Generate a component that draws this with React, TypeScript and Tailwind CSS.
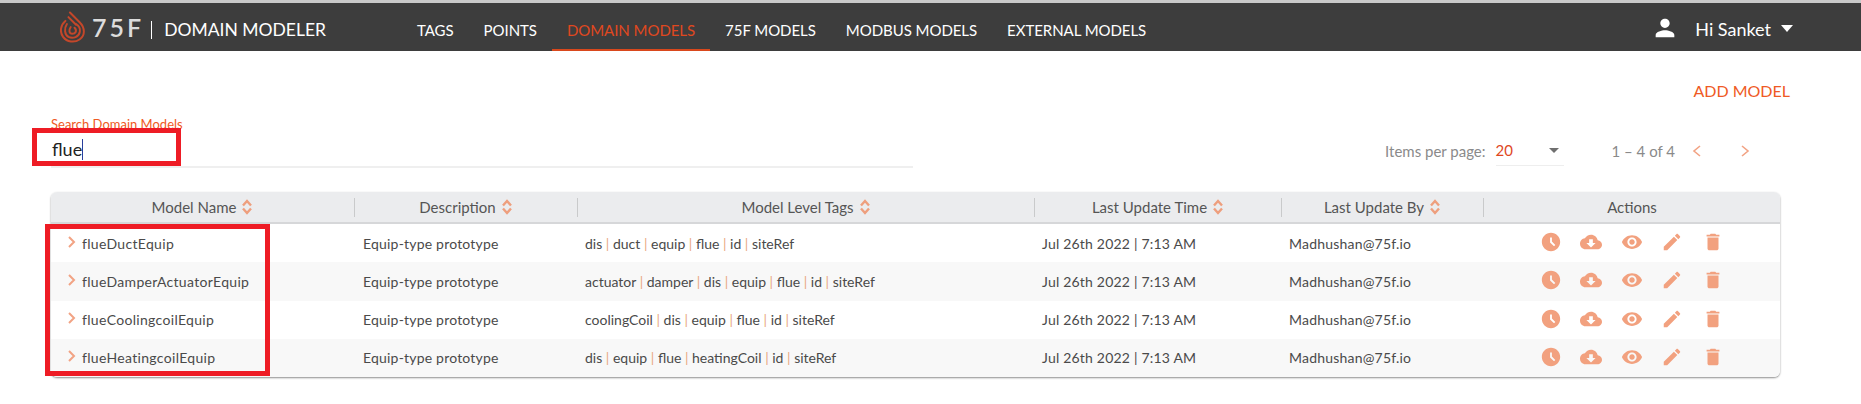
import React from "react";

const rows = [
  { name: "flueDuctEquip", tags: ["dis", "duct", "equip", "flue", "id", "siteRef"] },
  { name: "flueDamperActuatorEquip", tags: ["actuator", "damper", "dis", "equip", "flue", "id", "siteRef"] },
  { name: "flueCoolingcoilEquip", tags: ["coolingCoil", "dis", "equip", "flue", "id", "siteRef"] },
  { name: "flueHeatingcoilEquip", tags: ["dis", "equip", "flue", "heatingCoil", "id", "siteRef"] },
];

const actionPaths = [
  "M11.99 2C6.47 2 2 6.48 2 12s4.47 10 9.99 10C17.52 22 22 17.52 22 12S17.52 2 11.99 2zm3.3 14.71L11 12.41V7h2v4.59l3.71 3.71-1.42 1.41z",
  "M19.35 10.04C18.67 6.59 15.64 4 12 4 9.11 4 6.6 5.64 5.35 8.04 2.34 8.36 0 10.91 0 14c0 3.31 2.69 6 6 6h13c2.76 0 5-2.24 5-5 0-2.64-2.05-4.78-4.65-4.96zM17 13l-5 5-5-5h3V9h4v4h3z",
  "M12 4.5C7 4.5 2.73 7.61 1 12c1.73 4.39 6 7.5 11 7.5s9.27-3.11 11-7.5c-1.73-4.39-6-7.5-11-7.5zM12 17c-2.76 0-5-2.24-5-5s2.24-5 5-5 5 2.24 5 5-2.24 5-5 5zm0-8c-1.66 0-3 1.34-3 3s1.34 3 3 3 3-1.34 3-3-1.34-3-3-3z",
  "M3 17.25V21h3.75L17.81 9.94l-3.75-3.75L3 17.25zM20.71 7.04c.39-.39.39-1.02 0-1.41l-2.34-2.34c-.39-.39-1.02-.39-1.41 0l-1.83 1.83 3.75 3.75 1.83-1.83z",
  "M6 19c0 1.1.9 2 2 2h8c1.1 0 2-.9 2-2V7H6v12zM19 4h-3.5l-1-1h-5l-1 1H5v2h14V4z",
];

const navItems = ["TAGS", "POINTS", "DOMAIN MODELS", "75F MODELS", "MODBUS MODELS", "EXTERNAL MODELS"];

function Logo() {
  return (
    <svg width="26" height="32" viewBox="0 0 34 42" fill="none" stroke="#c4472a" strokeWidth="2.6" strokeLinecap="round">
      <path d="M13 2 L26 15 C33 22 33 32 26 37 C19 42 9 41 4 34 C-1 27 1 18 7 13" />
      <path d="M9 17 C5 23 6 31 11 34 C17 37 25 34 26 27 C27 22 24 19 21 17" />
      <path d="M11 8 L21 18" />
      <path d="M14 21 C11 25 12 30 16 30 C20 30 23 26 19 22" />
    </svg>
  );
}

function SortIcon() {
  return (
    <svg width="12" height="16" viewBox="0 0 12 16" fill="none" stroke="#ee9f7e" strokeWidth="2.4" className="shrink-0">
      <path d="M2 6.5 L6 2 L10 6.5" />
      <path d="M2 9.5 L6 14 L10 9.5" />
    </svg>
  );
}

function HeaderCell({ label, sort = true, last = false }: { label: string; sort?: boolean; last?: boolean }) {
  return (
    <div className={`flex h-[19px] items-center justify-center gap-[5px] ${last ? "" : "border-r border-[#c9cacb]"}`}>
      <span>{label}</span>
      {sort && <SortIcon />}
    </div>
  );
}

function Tags({ tags }: { tags: string[] }) {
  return (
    <span className="tracking-normal">
      {tags.map((t, i) => (
        <React.Fragment key={t}>
          {i > 0 && <span className="text-[#e9a77f]"> | </span>}
          {t}
        </React.Fragment>
      ))}
    </span>
  );
}

const gridCols = "grid grid-cols-[304px_223px_457px_247px_202px_1fr] items-center";

export default function App() {
  return (
    <div className="relative h-[404px] w-[1861px] overflow-hidden bg-white font-['Lato','Liberation_Sans',sans-serif]">
      <header className="flex h-[51px] items-stretch border-t-[3px] border-[#c9c9c9] bg-[#3d3d3d] pl-[60px] pr-[68px] text-white">
        <div className="flex w-[342px] items-center">
          <Logo />
          <span className="ml-[6px] text-[25px] font-semibold leading-none tracking-[3px] text-[#dcdcdc]">75F</span>
          <span className="ml-[7px] mr-[12px] mt-[5px] h-[18px] w-px bg-white" />
          <span className="mt-[6px] text-[17.5px] leading-none">DOMAIN MODELER</span>
        </div>
        <nav className="flex items-stretch">
          {navItems.map((n) => (
            <div
              key={n}
              className={`flex items-center px-[15px] pt-[8px] text-[15px] tracking-[-0.05px] ${
                n === "DOMAIN MODELS" ? "border-b-2 border-[#d9481c] text-[#e0481f]" : "border-b-2 border-transparent"
              }`}
            >
              {n}
            </div>
          ))}
        </nav>
        <div className="ml-auto flex items-center pt-[2px]">
          <svg width="28" height="28" viewBox="0 0 24 24" fill="#fff">
            <path d="M12 12c2.21 0 4-1.79 4-4s-1.79-4-4-4-4 1.79-4 4 1.79 4 4 4zm0 2c-2.67 0-8 1.34-8 4v2h16v-2c0-2.66-5.33-4-8-4z" />
          </svg>
          <span className="ml-[16px] mt-[2px] text-[18px]">Hi Sanket</span>
          <span className="ml-[10px] h-0 w-0 border-x-[6px] border-t-[7px] border-x-transparent border-t-white" />
        </div>
      </header>

      <main className="pl-[51px] pr-[71px]">
        <div className="flex justify-end pt-[31px] text-[16px] leading-[18px] text-[#ef5a24]">ADD MODEL</div>

        <div className="mt-[17px] flex items-start justify-between">
          <div className="w-[862px] border-b-2 border-[#efefef] pb-[6px]">
            <div className="text-[13px] leading-[14px] text-[#ef5a24]">Search Domain Models</div>
            <div className="mt-[7px] flex h-[22px] items-center pl-[1px] text-[18px] text-[#222]">
              flue
              <span className="h-[21px] w-px bg-[#2a3f9c]" />
            </div>
          </div>
          <div className="mt-[19px] flex items-center pr-[39px] text-[15px] text-[#8a8a8a]">
            <span>Items per page:</span>
            <div className="ml-[10px] flex h-[30px] w-[68px] items-center justify-between border-b border-[#eeeeee] pr-[5px]">
              <span className="text-[#e0481f]">20</span>
              <span className="h-0 w-0 border-x-[5px] border-t-[5px] border-x-transparent border-t-[#6f6f6f]" />
            </div>
            <span className="ml-[48px]">1 – 4 of 4</span>
            <svg width="12" height="14" viewBox="0 0 12 14" fill="none" stroke="#f2a384" strokeWidth="1.6" className="ml-[16px]">
              <path d="M9 2 L3 7 L9 12" />
            </svg>
            <svg width="12" height="14" viewBox="0 0 12 14" fill="none" stroke="#f2a384" strokeWidth="1.6" className="ml-[36px]">
              <path d="M3 2 L9 7 L3 12" />
            </svg>
          </div>
        </div>

        <div className="mr-[10px] mt-[24px] overflow-hidden rounded-[6px] shadow-[0_1px_2px_rgba(0,0,0,0.45)]">
          <div className={`${gridCols} h-[32px] border-b-2 border-[#d6d7d9] bg-[#ebecee] text-[15px] text-[#555]`}>
            <HeaderCell label="Model Name" />
            <HeaderCell label="Description" />
            <HeaderCell label="Model Level Tags" />
            <HeaderCell label="Last Update Time" />
            <HeaderCell label="Last Update By" />
            <HeaderCell label="Actions" sort={false} last />
          </div>
          {rows.map((r, i) => (
            <div key={r.name} className={`${gridCols} h-[38.25px] text-[14px] tracking-[0.2px] text-[#4a4a4a] ${i % 2 ? "bg-[#f8f8f8]" : "bg-white"}`}>
              <div className="flex items-center pl-[16px]">
                <svg width="10" height="14" viewBox="0 0 10 14" fill="none" stroke="#f2a384" strokeWidth="2" className="mb-[3px]">
                  <path d="M2 2 L7 7 L2 12" />
                </svg>
                <span className="ml-[5px] tracking-[0.32px]">{r.name}</span>
              </div>
              <div className="pl-[8px]">Equip-type prototype</div>
              <div className="pl-[7px]">
                <Tags tags={r.tags} />
              </div>
              <div className="pl-[7px]">Jul 26th 2022 | 7:13 AM</div>
              <div className="pl-[7px]">Madhushan@75f.io</div>
              <div className="flex items-center justify-center gap-[18.5px] pb-[2px] pr-[1px]">
                {actionPaths.map((d) => (
                  <svg key={d} width="22" height="22" viewBox="0 0 24 24" fill="#f2a17f">
                    <path d={d} />
                  </svg>
                ))}
              </div>
            </div>
          ))}
        </div>
      </main>

      <div className="absolute left-[32px] top-[128px] h-[38px] w-[149px] border-[5px] border-[#ee1c25]" />
      <div className="absolute left-[45px] top-[224px] h-[152px] w-[225px] border-[5px] border-[#ee1c25]" />
    </div>
  );
}
